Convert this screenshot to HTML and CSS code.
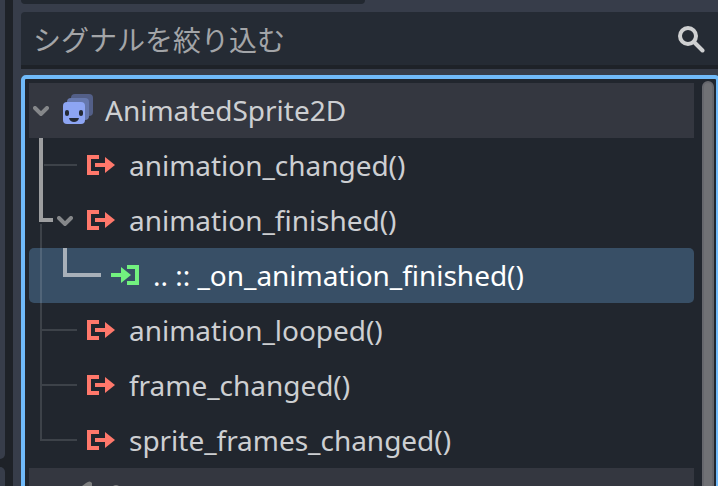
FILE: index.html
```html
<!DOCTYPE html>
<html lang="ja">
<head>
<meta charset="utf-8">
<title>シグナル</title>
<link rel="stylesheet" href="styles.css">
</head>
<body>
<svg class="defs" width="0" height="0" aria-hidden="true">
  <symbol id="signal" viewBox="0 0 28 20"><path d="M0 0h12v4H4v12h8v4H0zM8 8h10V2l10 8-10 8v-6H8z"/></symbol>
  <symbol id="slot" viewBox="0 0 28 20"><path d="M0 8h10V2l10 8-10 8v-6H0zM16 0h12v20H16v-4h8V4h-8z"/></symbol>
  <symbol id="chevron" viewBox="0 0 16 10"><path d="M2 2l6 6 6-6" fill="none" stroke="currentColor" stroke-width="4" stroke-linecap="round"/></symbol>
</svg>
<div class="window">
  <aside class="side"><div class="side-top"></div><div class="side-bottom"></div></aside>
  <main class="dock">
    <div class="tab"></div>
    <div class="search">
      <span class="placeholder">シグナルを絞り込む</span>
      <svg class="lens" viewBox="0 0 28 28"><circle cx="11" cy="11" r="8" /><path d="M17 17l8.500 8.500"/></svg>
    </div>
    <div class="tree">
      <div class="rows">
        <div class="row group">
          <svg class="chev"><use href="#chevron"/></svg>
          <svg class="sprite" viewBox="0 0 30 30"><rect x="8" width="22" height="22" rx="4" fill="#535f88"/><rect x="4" y="4" width="22" height="22" rx="4" fill="#6678ad"/><rect y="8" width="22" height="22" rx="4" fill="#8da5f3"/><rect x="2" y="16" width="4" height="6" rx="2" fill="#242a35"/><rect x="16" y="16" width="4" height="6" rx="2" fill="#242a35"/><path d="M6 24h10c-.5 2.700-2.500 4-5 4s-4.500-1.300-5-4z" fill="#242a35"/></svg>
          <span>AnimatedSprite2D</span>
        </div>
        <div class="row signal"><svg class="icon"><use href="#signal"/></svg><span>animation_changed()</span></div>
        <div class="row signal open"><svg class="chev"><use href="#chevron"/></svg><svg class="icon"><use href="#signal"/></svg><span>animation_finished()</span></div>
        <div class="row slot"><svg class="icon"><use href="#slot"/></svg><span>.. :: _on_animation_finished()</span></div>
        <div class="row signal"><svg class="icon"><use href="#signal"/></svg><span>animation_looped()</span></div>
        <div class="row signal"><svg class="icon"><use href="#signal"/></svg><span>frame_changed()</span></div>
        <div class="row signal"><svg class="icon"><use href="#signal"/></svg><span>sprite_frames_changed()</span></div>
        <div class="row next"><svg class="node" viewBox="0 0 40 5"><path d="M0 5l4-3q4-3 6 0v3zM31 5q3-2 6 0z"/></svg></div>
        <svg class="guides" viewBox="0 0 80 385">
          <path class="thin" d="M15 82h33M12 141v217M13 247h35M13 302h35M13 357h35"/>
          <path class="thick" d="M12 55v82h12"/>
          <path class="thick selected" d="M36 165v27h36"/>
        </svg>
      </div>
      <div class="scrollbar"></div>
    </div>
  </main>
</div>
</body>
</html>
```
FILE: styles.css
```css
* { box-sizing: border-box; }
body {
  margin: 0;
  overflow: hidden;
  background: #373d4a;
  color: #cdcfd2;
  font: 28px/55px "Noto Sans", "Noto Sans CJK JP", sans-serif;
}
svg { display: block; flex: none; fill: currentColor; }
.defs { position: absolute; }
.window { display: flex; width: 720px; height: 486px; overflow: hidden; }
.side { width: 13px; height: 486px; flex: none; background: #1e2228; padding-right: 8px; }
.side-top { height: 459px; background: #373d4a; border-bottom-right-radius: 5px; }
.side-bottom { height: 27px; margin-top: 8px; background: #373d4a; border-top-right-radius: 5px; }
.dock { width: 707px; padding-left: 8px; }
.tab { width: 344px; height: 4px; background: #222830; border-radius: 0 0 4px 4px; }
.search {
  display: flex;
  align-items: center;
  justify-content: space-between;
  height: 57px;
  margin-top: 8px;
  padding: 0 15px 0 12px;
  background: #252b34;
  border-bottom: 4px solid #1e2228;
  border-radius: 4px 4px 0 0;
}
.placeholder { margin-top: 2px; font-family: "Noto Sans CJK JP", sans-serif; color: #a3a5a8; }
.lens { width: 28px; height: 28px; margin-top: 1px; fill: none; stroke: #cfd0d1; stroke-width: 4; stroke-linecap: round; }
.tree {
  display: flex;
  height: 430px;
  margin-top: 6px;
  padding: 4px 4px 0;
  background: #21262e;
  border: 4px solid #70bafa;
  border-radius: 5px;
}
.rows { position: relative; width: 665px; flex: none; }
.row { display: flex; align-items: center; height: 55px; white-space: pre; letter-spacing: -.03px; }
.group, .next { background: #343740; }
.group { padding-left: 4px; letter-spacing: 0; }
.chev { width: 16px; height: 10px; margin-top: 1px; color: #85878a; }
.sprite { width: 30px; height: 30px; margin: 0 12px 3px 14px; }
.icon { width: 28px; height: 20px; margin: 0 14px 1px 58px; color: #ff786b; }
.open .chev { margin-left: 28px; }
.open .icon { margin-left: 14px; }
.slot { background: #384f66; border-radius: 5px; color: #fff; }
.slot .icon { margin-left: 82px; color: #72f17f; }
.node { width: 40px; height: 5px; margin: 13px 0 0 53px; align-self: flex-start; color: #7d7e7f; }
.guides { position: absolute; left: 0; top: 0; width: 80px; height: 385px; fill: none; }
.thin { stroke: rgba(255,255,255,.13); stroke-width: 2; }
.thick { stroke: #9d9ea0; stroke-width: 4; }
.thick.selected { stroke: #a8b0b9; }
.scrollbar { width: 12px; height: 430px; margin: -2px 0 0 8px; flex: none; background: #707175; border: 2px solid #66676d; border-radius: 6px; }
```
